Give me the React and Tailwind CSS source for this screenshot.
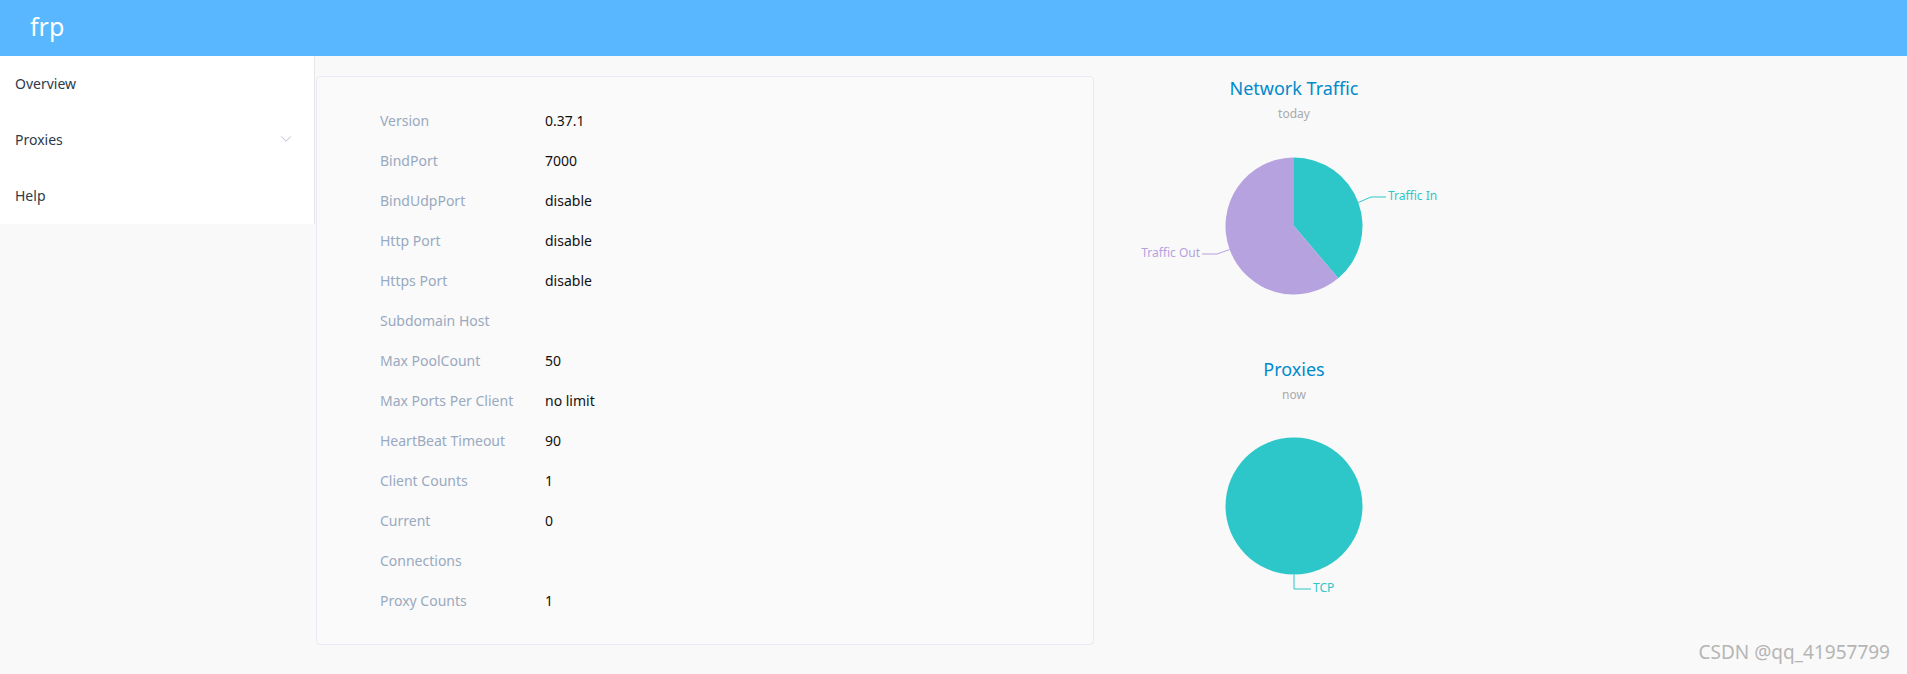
import { ChevronDown } from "lucide-react";

const rows = [
  ["Version", "0.37.1"],
  ["BindPort", "7000"],
  ["BindUdpPort", "disable"],
  ["Http Port", "disable"],
  ["Https Port", "disable"],
  ["Subdomain Host", ""],
  ["Max PoolCount", "50"],
  ["Max Ports Per Client", "no limit"],
  ["HeartBeat Timeout", "90"],
  ["Client Counts", "1"],
  ["Current", "0"],
  ["Connections", ""],
  ["Proxy Counts", "1"],
];

function ChartTitle({ title, sub }) {
  return (
    <div className="flex flex-col items-center">
      <div className="text-[18px] leading-[24px] text-[#008acd]">{title}</div>
      <div className="mt-[6px] text-[12px] leading-[16px] text-[#aaaaaa]">{sub}</div>
    </div>
  );
}

function TrafficPie() {
  const cx = 200, cy = 104, r = 68.5;
  const a = (139.8 * Math.PI) / 180;
  const ex = cx + r * Math.sin(a);
  const ey = cy - r * Math.cos(a);
  return (
    <svg width="400" height="235" className="block">
      <path d={`M${cx},${cy} L${cx},${cy - r} A${r},${r} 0 0 1 ${ex},${ey} Z`} fill="#2ec7c9" />
      <path d={`M${cx},${cy} L${ex},${ey} A${r},${r} 0 1 1 ${cx},${cy - r} Z`} fill="#b6a2de" />
      <polyline points="264.3,80.5 277,75 292,75" fill="none" stroke="#2ec7c9" strokeWidth="1" />
      <text x="294" y="75" dominantBaseline="middle" fontSize="12" fill="#2ec7c9">Traffic In</text>
      <polyline points="135.7,127.5 123,132 108,132" fill="none" stroke="#b6a2de" strokeWidth="1" />
      <text x="106" y="132" textAnchor="end" dominantBaseline="middle" fontSize="12" fill="#b6a2de">Traffic Out</text>
    </svg>
  );
}

function ProxyPie() {
  return (
    <svg width="400" height="235" className="block">
      <circle cx="200" cy="103" r="68.5" fill="#2ec7c9" />
      <polyline points="200,171.5 200,186 217,186" fill="none" stroke="#2ec7c9" strokeWidth="1" />
      <text x="219" y="186" dominantBaseline="middle" fontSize="12" fill="#2ec7c9">TCP</text>
    </svg>
  );
}

export default function App() {
  return (
    <div className="relative min-h-screen bg-[#f9f9f9] font-['Noto_Sans',sans-serif]">
      <div className="h-14 bg-[#58b7ff] flex items-center pl-[30px]">
        <span className="text-white text-[25px] leading-none pb-[4px]">frp</span>
      </div>
      <div className="flex">
        <div className="w-[315px] bg-white border-r border-[#e6e6e6] self-start">
          <div className="h-14 flex items-center px-[15px] pb-[2px] text-[14px] text-[#2d3a4b]">Overview</div>
          <div className="h-14 flex items-center justify-between pl-[15px] pr-[19px] pb-[2px] text-[14px] text-[#2d3a4b]">
            <span>Proxies</span>
            <ChevronDown size={18} strokeWidth={1} className="text-[#97a8be]" />
          </div>
          <div className="h-14 flex items-center px-[15px] pb-[2px] text-[14px] text-[#2d3a4b]">Help</div>
        </div>
        <div className="flex pt-[20px] pl-[1px]">
          <div className="w-[778px] h-[569px] rounded-[4px] border border-[#e8ebf5] bg-[#fafafa] pt-[23px] pl-[63px]">
            {rows.map(([k, v]) => (
              <div key={k} className="flex h-10 items-center text-[14px]">
                <span className="w-[165px] text-[#99a9bf]">{k}</span>
                <span className="text-[#111111]">{v}</span>
              </div>
            ))}
          </div>
          <div className="w-[400px]">
            <ChartTitle title="Network Traffic" sub="today" />
            <TrafficPie />
            <ChartTitle title="Proxies" sub="now" />
            <ProxyPie />
          </div>
        </div>
      </div>
      <div className="absolute right-[17px] bottom-[8px] text-[19px] text-[#b5b5b5] font-['Noto_Sans',sans-serif]">
        CSDN @qq_41957799
      </div>
    </div>
  );
}
